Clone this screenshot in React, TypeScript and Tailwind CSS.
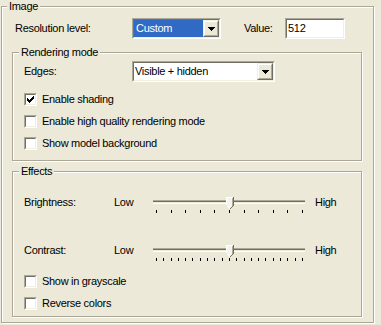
import React from "react";

function Sunken({ className, children }: { className: string; children?: React.ReactNode }) {
  return (
    <div className={`border border-t-[#aca899] border-l-[#aca899] border-r-white border-b-white ${className}`}>
      <div className="flex h-full w-full border border-t-[#716f64] border-l-[#716f64] border-r-[#f1efe2] border-b-[#f1efe2] bg-white">
        {children}
      </div>
    </div>
  );
}

function DropButton() {
  return (
    <div className="h-full w-[16px] border border-t-[#f1efe2] border-l-[#f1efe2] border-r-[#716f64] border-b-[#716f64]">
      <div className="flex h-full w-full items-center justify-center border border-t-white border-l-white border-r-[#aca899] border-b-[#aca899] bg-[#ece9d8]">
        <svg width="7" height="4" viewBox="0 0 7 4" shapeRendering="crispEdges">
          <rect x="0" y="0" width="7" height="1" fill="#000" />
          <rect x="1" y="1" width="5" height="1" fill="#000" />
          <rect x="2" y="2" width="3" height="1" fill="#000" />
          <rect x="3" y="3" width="1" height="1" fill="#000" />
        </svg>
      </div>
    </div>
  );
}

const CHECK_PIXELS: [number, number][] = [
  [7, 1],
  [6, 2], [7, 2],
  [1, 3], [5, 3], [6, 3], [7, 3],
  [1, 4], [2, 4], [4, 4], [5, 4], [6, 4],
  [1, 5], [2, 5], [3, 5], [4, 5], [5, 5],
  [2, 6], [3, 6], [4, 6],
  [3, 7],
];

function CheckRow({ label, checked }: { label: string; checked?: boolean }) {
  return (
    <div className="flex h-[22px] items-center pl-[11px]">
      <Sunken className="h-[13px] w-[13px]">
        {checked && (
          <svg width="9" height="9" viewBox="0 0 9 9" shapeRendering="crispEdges">
            {CHECK_PIXELS.map(([x, y], i) => (
              <rect key={i} x={x} y={y} width="1" height="1" fill="#000" />
            ))}
          </svg>
        )}
      </Sunken>
      <span className="ml-[5px] leading-[13px]">{label}</span>
    </div>
  );
}

function Slider({ ticks }: { ticks: number }) {
  return (
    <div className="relative h-[19px] w-[165px]">
      <div className="ml-[3px] mt-[5px] w-[152px] border-t border-b border-t-[#aca899] border-b-white">
        <div className="h-[1px] bg-[#716f64]" />
        <div className="h-[1px] bg-[#ece9d8]" />
      </div>
      <div className="ml-[6px] mt-[6px] flex w-[147px] justify-between">
        {Array.from({ length: ticks }).map((_, i) => (
          <div key={i} className="h-[3px] w-[1px] bg-black" />
        ))}
      </div>
      <svg
        className="absolute left-[76px] top-[2px]"
        width="8"
        height="12"
        viewBox="0 0 8 12"
        shapeRendering="crispEdges"
      >
        <polygon points="0,0 8,0 8,8 4,12 0,8" fill="#f4f3ee" />
        <rect x="0" y="0" width="7" height="1" fill="#fff" />
        <rect x="0" y="0" width="1" height="8" fill="#fff" />
        <rect x="7" y="0" width="1" height="9" fill="#716f64" />
        <rect x="6" y="1" width="1" height="8" fill="#aca899" />
        <rect x="6" y="9" width="1" height="1" fill="#716f64" />
        <rect x="5" y="10" width="1" height="1" fill="#716f64" />
        <rect x="4" y="11" width="1" height="1" fill="#716f64" />
        <rect x="1" y="9" width="1" height="1" fill="#fff" />
        <rect x="2" y="10" width="1" height="1" fill="#fff" />
        <rect x="3" y="11" width="1" height="1" fill="#fff" />
      </svg>
    </div>
  );
}

function SliderRow({ label, ticks, className }: { label: string; ticks: number; className: string }) {
  return (
    <div className={`flex h-[19px] items-start pl-[11px] ${className}`}>
      <span className="w-[90px] leading-[14px]">{label}</span>
      <span className="w-[36px] leading-[14px]">Low</span>
      <Slider ticks={ticks} />
      <span className="leading-[14px]">High</span>
    </div>
  );
}

export default function App() {
  return (
    <div className="h-[325px] w-[381px] bg-[#ece9d8] font-['Liberation_Sans',Arial,sans-serif] text-[11px] leading-[13px] tracking-[-0.3px] text-black">
      <fieldset className="ml-[1px] h-[323px] w-[373px] border border-[#aca899] shadow-[inset_1px_1px_0_#fff,1px_1px_0_#fff]">
        <legend className="ml-[5px] bg-[#ece9d8] px-[2px] leading-[13px]">Image</legend>

        <div className="mt-[5px] flex h-[21px] items-center pl-[13px]">
          <span className="w-[117px]">Resolution level:</span>
          <Sunken className="h-[21px] w-[89px]">
            <div className="flex flex-1 items-center bg-[#316ac5] pl-[2px] text-white">Custom</div>
            <DropButton />
          </Sunken>
          <span className="ml-[23px] w-[41px]">Value:</span>
          <Sunken className="h-[21px] w-[60px]">
            <div className="flex flex-1 items-center pl-[1px]">512</div>
          </Sunken>
        </div>

        <fieldset className="ml-[10px] mt-[7px] w-[350px] border border-[#aca899] pb-[6px] shadow-[inset_1px_1px_0_#fff,1px_1px_0_#fff]">
          <legend className="ml-[6px] bg-[#ece9d8] px-[2px] leading-[13px]">Rendering mode</legend>
          <div className="mt-[2px] flex h-[21px] items-center pl-[11px]">
            <span className="w-[108px]">Edges:</span>
            <Sunken className="h-[21px] w-[143px]">
              <div className="flex flex-1 items-center pl-[1px]">Visible + hidden</div>
              <DropButton />
            </Sunken>
          </div>
          <div className="mt-[6px]">
            <CheckRow label="Enable shading" checked />
            <CheckRow label="Enable high quality rendering mode" />
            <CheckRow label="Show model background" />
          </div>
        </fieldset>

        <fieldset className="ml-[10px] mt-[4px] w-[350px] border border-[#aca899] pb-[2px] shadow-[inset_1px_1px_0_#fff,1px_1px_0_#fff]">
          <legend className="ml-[6px] bg-[#ece9d8] px-[2px] leading-[13px]">Effects</legend>
          <SliderRow label="Brightness:" ticks={11} className="mt-[17px]" />
          <SliderRow label="Contrast:" ticks={21} className="mt-[29px]" />
          <div className="mt-[8px]">
            <CheckRow label="Show in grayscale" />
            <CheckRow label="Reverse colors" />
          </div>
        </fieldset>
      </fieldset>
    </div>
  );
}
